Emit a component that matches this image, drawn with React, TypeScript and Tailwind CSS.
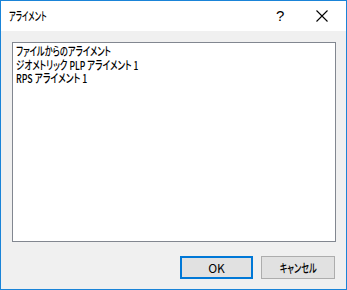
import React from "react";

export default function App() {
  const font = {
    fontFamily: '"Noto Sans CJK JP", "Noto Sans", sans-serif',
    fontFeatureSettings: '"palt"',
  };
  return (
    <div
      className="w-[347px] h-[290px] border border-[#1a84d8] bg-[#f0f0f0] flex flex-col text-black"
      style={font}
    >
      <div className="h-[30px] bg-white flex items-center pl-[8px] relative shrink-0">
        <span className="text-[12px] font-medium leading-none text-black inline-block origin-left scale-x-[0.6] whitespace-nowrap">アライメント</span>
        <span className="absolute left-[275px] top-[7px] text-[15px] leading-none" style={{ fontFamily: '"Liberation Sans", sans-serif' }}>?</span>
        <svg className="absolute left-[315px] top-[9px]" width="12" height="12" viewBox="0 0 12 12">
          <path d="M0.5 0.5 L11.5 11.5 M11.5 0.5 L0.5 11.5" stroke="#000" strokeWidth="1.1" />
        </svg>
      </div>
      <div className="flex-1 flex flex-col pt-[11px] px-[11px]">
        <div className="h-[200px] w-[324px] border border-[#828790] bg-white pl-[3px] pt-[1px] text-[12px] font-medium leading-[13.5px]">
          <div className="origin-left scale-x-[0.69] whitespace-nowrap">ファイルからのアライメント</div>
          <div className="origin-left scale-x-[0.71] whitespace-nowrap">ジオメトリック PLP アライメント 1</div>
          <div className="origin-left scale-x-[0.73] whitespace-nowrap">RPS アライメント 1</div>
        </div>
        <div className="flex justify-end gap-[8px] mt-[14px]">
          <button className="w-[73px] h-[23px] border-2 border-[#0078d7] bg-[#e1e1e1] text-[12px] leading-none flex items-center justify-center">
            OK
          </button>
          <button className="w-[74px] h-[23px] border border-[#adadad] bg-[#e1e1e1] text-[12px] font-medium leading-none flex items-center justify-center">
            <span className="inline-block scale-x-[0.68] whitespace-nowrap">キャンセル</span>
          </button>
        </div>
      </div>
    </div>
  );
}
